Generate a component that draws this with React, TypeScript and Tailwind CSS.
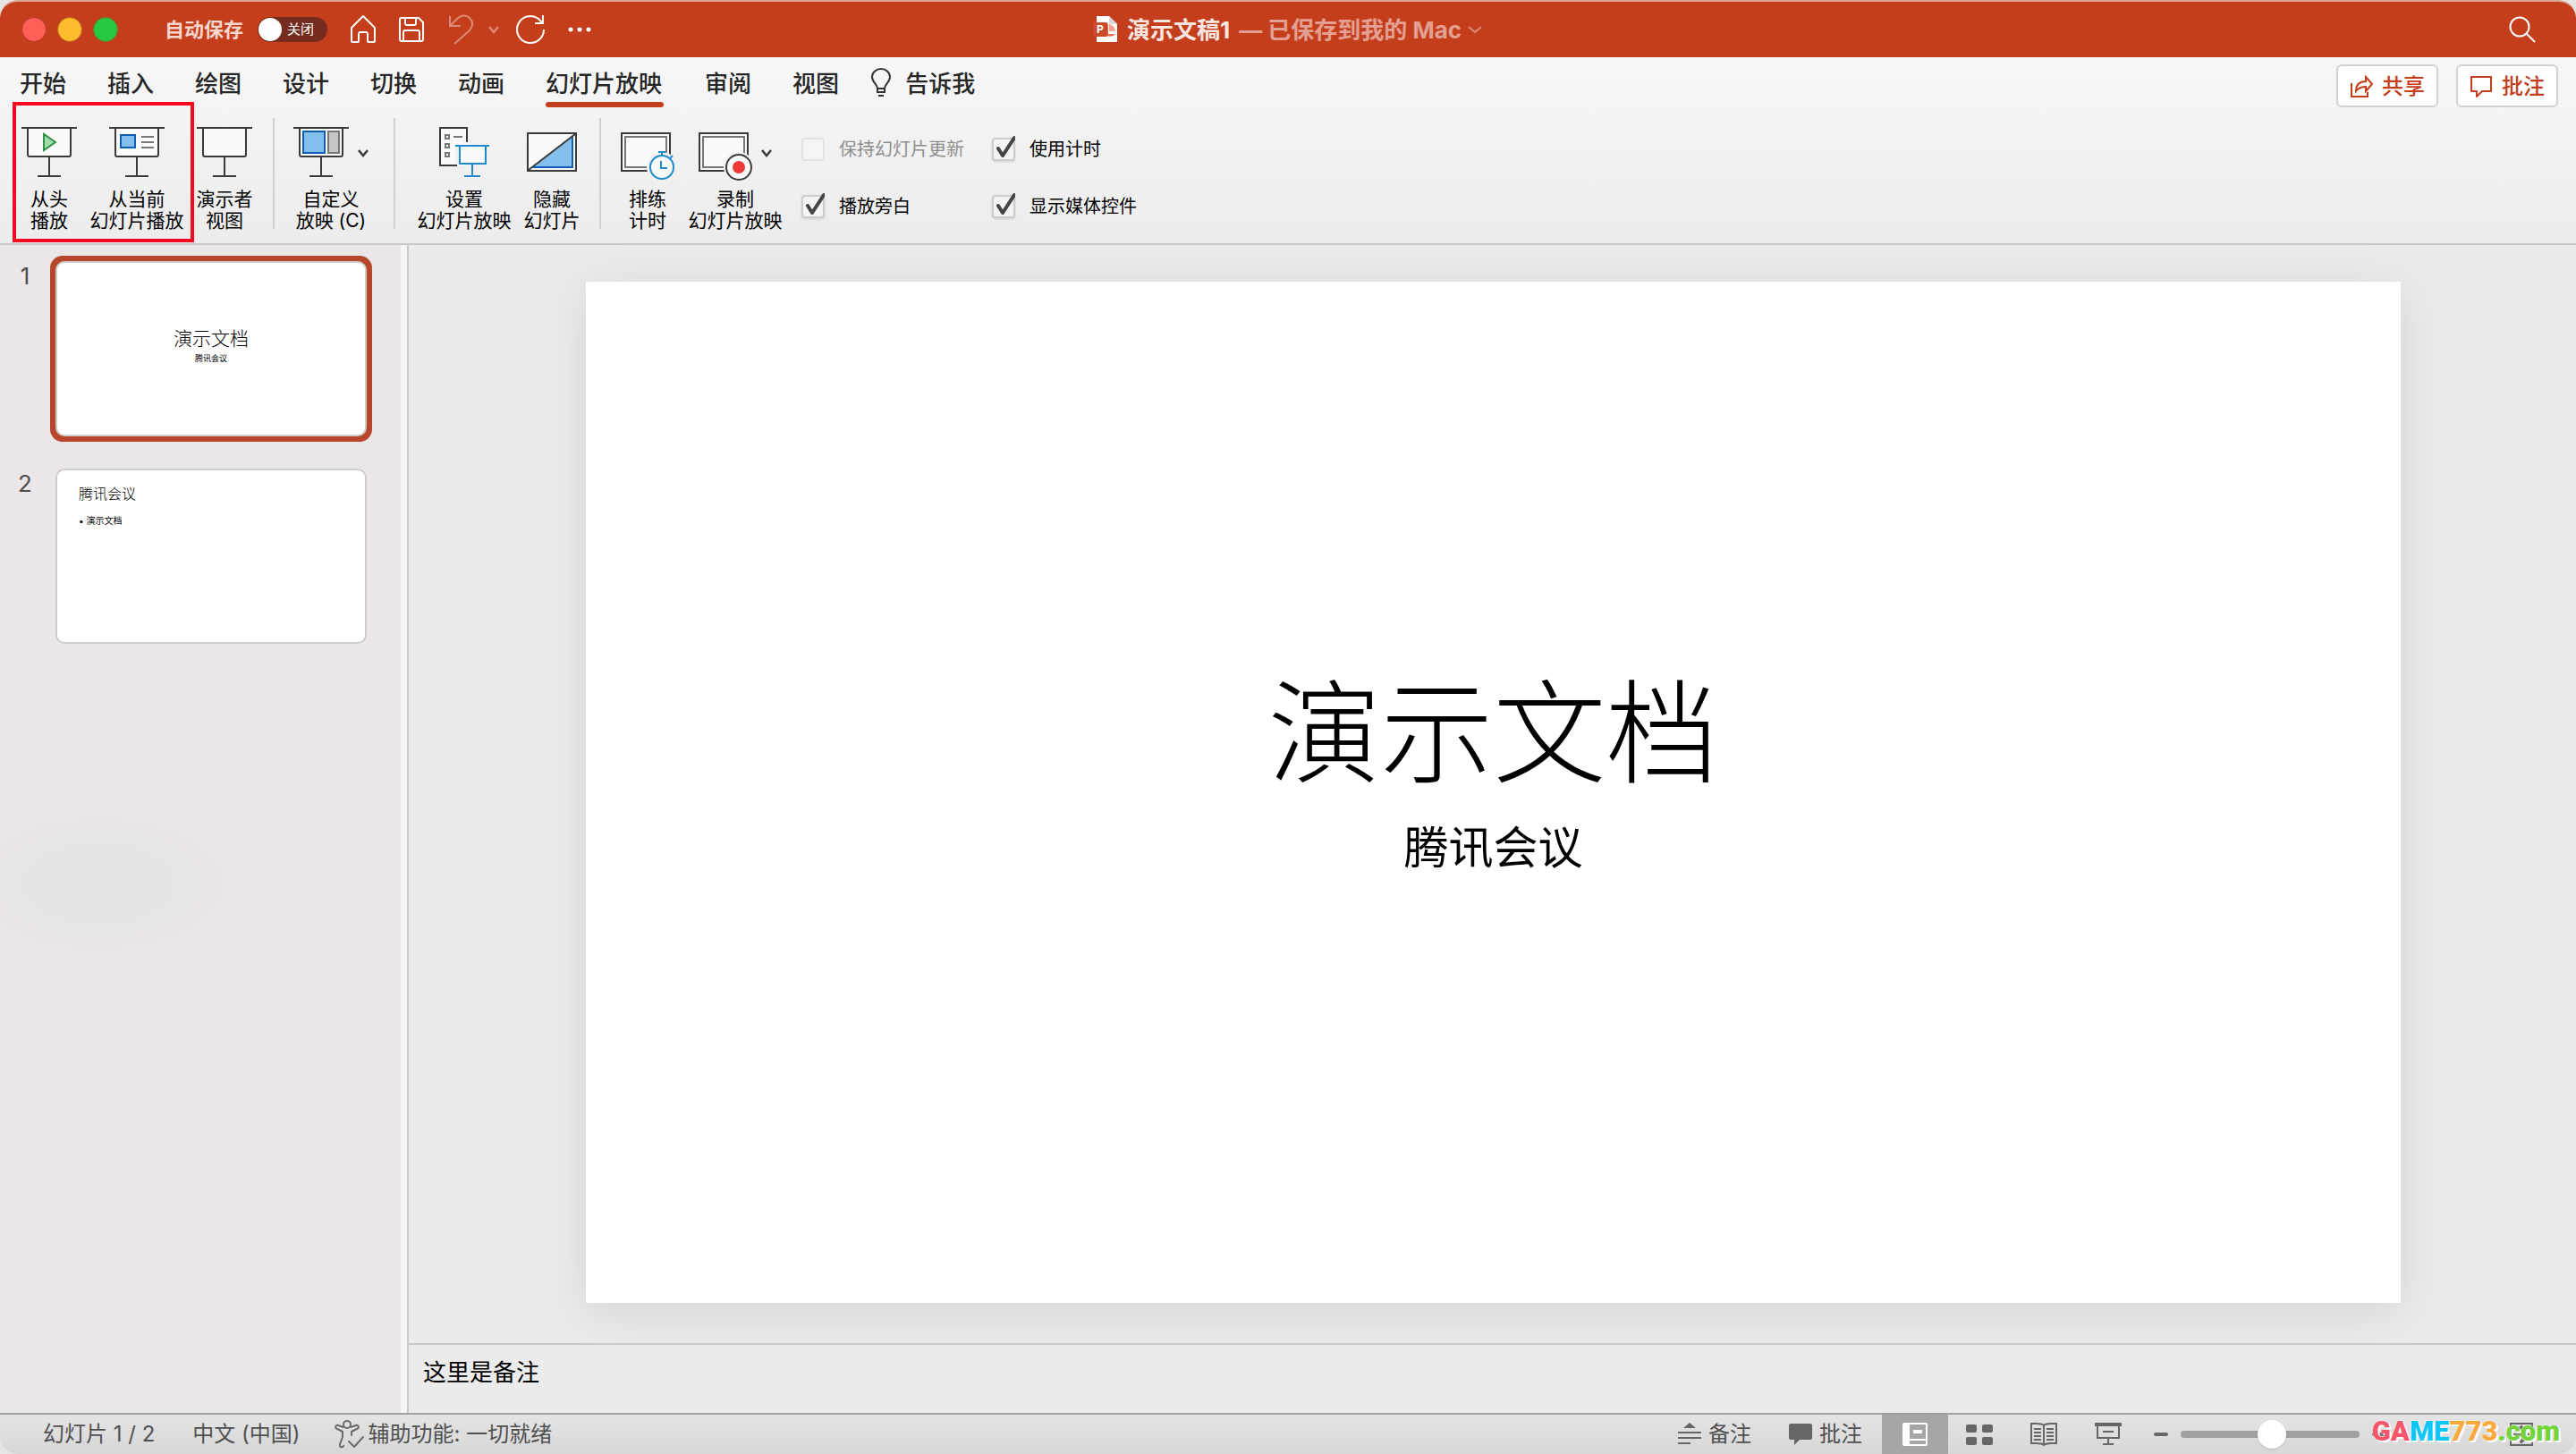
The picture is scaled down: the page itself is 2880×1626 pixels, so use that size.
import type { ReactNode } from "react";

const tabs = ["开始", "插入", "绘图", "设计", "切换", "动画", "幻灯片放映", "审阅", "视图"];

// Projector screen used by several ribbon buttons
function ScreenIcon({ children }: { children?: ReactNode }) {
  return (
    <svg width="62" height="56" viewBox="0 0 62 56" fill="none" aria-hidden="true">
      <path d="M7 2h48v31H7z" fill="#fafafa" />
      <path d="M0 1h62M7 1v30q0 2 2 2h44q2 0 2-2V1M31 33v22M18 55h26" stroke="#3b3a39" strokeWidth="2" />
      {children}
    </svg>
  );
}

function FromStartIcon() {
  return (
    <ScreenIcon>
      <path d="M25 8v18l13-9z" fill="#a1dcaa" stroke="#309048" strokeWidth="2" />
    </ScreenIcon>
  );
}

function FromCurrentIcon() {
  return (
    <ScreenIcon>
      <path d="M13 9h16v14H13z" fill="#83beec" stroke="#0f5fb0" strokeWidth="2" />
      <path d="M36 11h14M36 17h14M36 23h14" stroke="#797774" strokeWidth="2" />
    </ScreenIcon>
  );
}

function CustomShowIcon() {
  return (
    <ScreenIcon>
      <path d="M11 5h24v24H11z" fill="#83beec" stroke="#0f5fb0" strokeWidth="2" />
      <path d="M39 5h12v24H39z" fill="#c8c6c4" stroke="#797774" strokeWidth="2" />
    </ScreenIcon>
  );
}

function SetupIcon() {
  return (
    <svg width="56" height="56" viewBox="0 0 56 56" fill="none" aria-hidden="true">
      <path d="M1 1h30v42H1z" fill="#fafafa" />
      <path d="M31 17V1H1v42h19" stroke="#3b3a39" strokeWidth="2" />
      <path d="M7 9h4v4H7zM7 19h4v4H7zM7 29h4v4H7zM16 11h10" stroke="#797774" strokeWidth="2" />
      <path d="M18 20h38v22H18z" fill="#f0f0f0" />
      <path d="M23 22h29v19H23z" fill="#fafafa" />
      <path d="M18 21h38M23 21v20h29V21M37 41v14M28 55h18" stroke="#1e8bcd" strokeWidth="2" />
    </svg>
  );
}

function HideIcon() {
  return (
    <svg width="56" height="56" viewBox="0 0 56 56" fill="none" aria-hidden="true">
      <path d="M1 7h54v42H1z" fill="#fafafa" stroke="#3b3a39" strokeWidth="2" />
      <path d="M51 11v34H6z" fill="#83beec" />
      <path d="M51 11v34H6" stroke="#0f5fb0" strokeWidth="2" />
      <path d="M2 48 54 8" stroke="#3b3a39" strokeWidth="2" />
    </svg>
  );
}

function RehearseIcon() {
  return (
    <svg width="60" height="60" viewBox="0 0 60 60" fill="none" aria-hidden="true">
      <path d="M1 7h54v42H1z" fill="#fafafa" stroke="#3b3a39" strokeWidth="2" />
      <path d="M5 11h46v34H5z" stroke="#797774" strokeWidth="2" />
      <circle cx="46" cy="45" r="17" fill="#f1f1f1" />
      <circle cx="46" cy="45" r="13" fill="#fafafa" stroke="#1e8bcd" strokeWidth="2" />
      <path d="M46 32v-4M42 28h8M55 35l3-3M45 38v8h7" stroke="#1e8bcd" strokeWidth="2" />
    </svg>
  );
}

function RecordIcon() {
  return (
    <svg width="60" height="60" viewBox="0 0 60 60" fill="none" aria-hidden="true">
      <path d="M1 7h54v42H1z" fill="#fafafa" stroke="#3b3a39" strokeWidth="2" />
      <path d="M5 11h46v34H5z" stroke="#797774" strokeWidth="2" />
      <circle cx="45" cy="45" r="17" fill="#f1f1f1" />
      <circle cx="45" cy="45" r="14" fill="#fafafa" stroke="#3b3a39" strokeWidth="2" />
      <circle cx="45" cy="45" r="7" fill="#ee3b3a" />
    </svg>
  );
}

function Chevron({ className }: { className?: string }) {
  return (
    <svg width="12" height="10" viewBox="0 0 12 10" fill="none" stroke="currentColor" strokeWidth="2.500" className={className} aria-hidden="true">
      <path d="M1 2l5 6 5-6" />
    </svg>
  );
}

type RibbonButtonProps = {
  icon: ReactNode;
  lines: [string, string];
  menu?: boolean;
  className: string;
};

function RibbonButton({ icon, lines, menu, className }: RibbonButtonProps) {
  return (
    <button type="button" className={`flex shrink-0 flex-col items-center whitespace-nowrap text-[21px] leading-6 text-black ${className}`}>
      <span className="flex h-[69px] items-start gap-2.5">
        {icon}
        {menu && <Chevron className="mt-6 text-[#3b3a39]" />}
      </span>
      <span>{lines[0]}</span>
      <span>{lines[1]}</span>
    </button>
  );
}

function Divider({ className }: { className: string }) {
  return <div className={`-mt-2.5 h-[124px] w-0.5 shrink-0 bg-[#d0d0d0] ${className}`} />;
}

function Option({ label, checked, disabled }: { label: string; checked?: boolean; disabled?: boolean }) {
  return (
    <label className={`flex h-7 items-center gap-4 whitespace-nowrap text-xl ${disabled ? "text-[#8e8e8e]" : "text-black"}`}>
      <span className="relative h-[26px] w-[26px]">
        <input
          type="checkbox"
          defaultChecked={checked}
          disabled={disabled}
          className="peer block h-full w-full appearance-none rounded border-2 border-[#cdcdcd] bg-[#f4f4f4] shadow-sm disabled:border-[#e2e2e2] disabled:shadow-none"
        />
        <svg viewBox="0 0 26 30" className="pointer-events-none absolute -top-1 left-0 hidden h-[30px] w-[26px] peer-checked:block" fill="none" stroke="#454545" strokeWidth="4" strokeLinecap="round" strokeLinejoin="round" aria-hidden="true">
          <path d="M7 16l5 8L25 4" />
        </svg>
      </span>
      {label}
    </label>
  );
}

function TitleBar() {
  return (
    <header className="grid h-16 shrink-0 grid-cols-[1fr_auto_1fr] items-center rounded-t-[20px] border-t-2 border-[#dda394] bg-[#c43e1c] text-white">
      <div className="flex items-center pl-6">
        <div className="flex gap-3">
          <button type="button" aria-label="关闭窗口" className="h-7 w-7 rounded-full border border-[#b8352b] bg-[#ff5f57]" />
          <button type="button" aria-label="最小化" className="h-7 w-7 rounded-full border border-[#b86a1b] bg-[#febc2e]" />
          <button type="button" aria-label="缩放" className="h-7 w-7 rounded-full border border-[#6f7a1e] bg-[#28c840]" />
        </div>
        <span className="ml-[52px] text-[22px] font-bold text-[#f6d6cd]">自动保存</span>
        <button type="button" role="switch" aria-checked="false" className="ml-4 flex h-7 w-[78px] items-center gap-1.5 rounded-full bg-[#762d20] pl-px text-[15px]">
          <span className="h-[26px] w-[26px] rounded-full bg-white" />
          关闭
        </button>
        <button type="button" aria-label="主页" className="ml-6">
          <svg width="32" height="32" viewBox="0 0 32 32" fill="none" stroke="white" strokeWidth="2" strokeLinejoin="round">
            <path d="M3 14 16 1l13 13v15q0 1-1 1h-6q-1 0-1-1v-8q0-2-2-2h-6q-2 0-2 2v8q0 1-1 1H4q-1 0-1-1z" />
          </svg>
        </button>
        <button type="button" aria-label="保存" className="ml-[22px]">
          <svg width="32" height="32" viewBox="0 0 32 32" fill="none" stroke="white" strokeWidth="2" strokeLinejoin="round">
            <path d="M5 3h19l5 5v19q0 2-2 2H5q-2 0-2-2V5q0-2 2-2zM9 3v6q0 2 2 2h8q2 0 2-2V3M7 29V19q0-2 2-2h14q2 0 2 2v10" />
          </svg>
        </button>
        <div className="ml-6 flex items-center gap-4 text-[#dc8b76]">
          <button type="button" aria-label="撤消">
            <svg width="30" height="34" viewBox="0 0 30 34" fill="none" stroke="currentColor" strokeWidth="2">
              <path d="M3 2v11h12M3 13 11 5c4-4 10-5 14-1s4 9 0 14L8 33" />
            </svg>
          </button>
          <Chevron />
        </div>
        <button type="button" aria-label="重做" className="ml-[18px]">
          <svg width="34" height="34" viewBox="0 0 34 34" fill="none" stroke="white" strokeWidth="2">
            <path d="M32 17A15 15 0 1 1 26 5l4 4M31 1v9h-9" />
          </svg>
        </button>
        <button type="button" aria-label="更多" className="ml-6">
          <svg width="28" height="8" viewBox="0 0 28 8" fill="white">
            <circle cx="4" cy="4" r="2.500" />
            <circle cx="14" cy="4" r="2.500" />
            <circle cx="24" cy="4" r="2.500" />
          </svg>
        </button>
      </div>

      <h1 className="flex items-center whitespace-nowrap text-[26px] font-bold">
        <svg width="28" height="32" viewBox="0 0 28 32" className="mr-2.5" aria-hidden="true">
          <path d="M4 1h14l9 9v20H4z" fill="#fff" />
          <path d="M18 1v9h9z" fill="#d9d9d9" />
          <path d="M17 11v10h8a8 8 0 0 1-9 2V9z" fill="#e8694a" />
          <path d="M18 10a8 8 0 0 1 7 8h-7z" fill="#f6a18b" />
          <rect y="8" width="16" height="16" rx="1" fill="#cb4a2d" />
          <text x="4" y="20" fontSize="12" fontWeight="700" fill="#fff">P</text>
        </svg>
        <span className="text-[#fae6e1]">演示文稿1</span>
        <span className="ml-2.5 text-[#e3a092]">— 已保存到我的 Mac</span>
        <svg width="18" height="12" viewBox="0 0 18 12" fill="none" stroke="#dc8b76" strokeWidth="2" className="ml-1.5" aria-hidden="true">
          <path d="M2 3l7 6 7-6" />
        </svg>
      </h1>

      <div className="flex justify-end pr-[45px]">
        <button type="button" aria-label="搜索">
          <svg width="30" height="30" viewBox="0 0 30 30" fill="none" stroke="white" strokeWidth="2">
            <circle cx="12" cy="12" r="10.500" />
            <path d="M19.500 19.500 29 29" />
          </svg>
        </button>
      </div>
    </header>
  );
}

function TabRow() {
  return (
    <div className="flex h-14 items-start justify-between pr-5">
      <nav className="flex items-center pl-[22px] text-[26px] font-medium text-[#262626]">
        <div className="flex gap-[46px]">
          {tabs.map((tab) => (
            <button
              key={tab}
              type="button"
              className={`flex h-14 flex-col justify-between whitespace-nowrap pt-3 text-left leading-9 ${tab === "幻灯片放映" ? "min-w-[132px]" : ""}`}
            >
              {tab}
              {tab === "幻灯片放映" && <span className="h-1.5 w-full rounded-full bg-[#c43e1c]" />}
            </button>
          ))}
        </div>
        <button type="button" className="ml-9 flex h-14 items-start gap-4 pt-3 leading-9">
          <svg width="22" height="32" viewBox="0 0 22 32" fill="none" stroke="#333" strokeWidth="2" aria-hidden="true">
            <path d="M7 23c0-5-6-7-6-13a10 9 0 0 1 20 0c0 6-6 8-6 13v4H7zM7 23h8M8 31h6" />
          </svg>
          告诉我
        </button>
      </nav>
      <div className="flex gap-5 pt-2 text-2xl font-medium text-[#c43e1c]">
        <button type="button" className="flex h-12 w-[114px] items-center justify-center gap-2.5 rounded-md border-2 border-[#d2d2d2] bg-white pt-0.5">
          <svg width="26" height="26" viewBox="0 0 26 26" fill="none" stroke="currentColor" strokeWidth="2" aria-hidden="true">
            <path d="M2 9v15h18v-5M7 18c0-8 4-11 11-11V2l7 8-7 8v-5c-5 0-8 1-11 5z" />
          </svg>
          共享
        </button>
        <button type="button" className="flex h-12 w-[114px] items-center justify-center gap-2.5 rounded-md border-2 border-[#d2d2d2] bg-white pt-0.5">
          <svg width="26" height="26" viewBox="0 0 26 26" fill="none" stroke="currentColor" strokeWidth="2" strokeLinejoin="round" aria-hidden="true">
            <path d="M2 2h22v16H14l-6 6v-6H2z" />
          </svg>
          批注
        </button>
      </div>
    </div>
  );
}

function Ribbon() {
  return (
    <section className="shrink-0 border-b-2 border-[#c8c8c8] bg-linear-to-b from-[#f7f7f7] to-[#ececec]">
      <TabRow />
      <div className="relative flex h-[152px] items-start pt-[22px]">
        <RibbonButton icon={<FromStartIcon />} lines={["从头", "播放"]} className="ml-6 w-[62px]" />
        <RibbonButton icon={<FromCurrentIcon />} lines={["从当前", "幻灯片播放"]} className="ml-3.5 w-[106px]" />
        <RibbonButton icon={<ScreenIcon />} lines={["演示者", "视图"]} className="ml-3.5 w-[62px]" />
        <Divider className="ml-[23px]" />
        <RibbonButton icon={<CustomShowIcon />} lines={["自定义", "放映 (C)"]} menu className="ml-5 w-[86px]" />
        <Divider className="ml-[27px]" />
        <RibbonButton icon={<SetupIcon />} lines={["设置", "幻灯片放映"]} className="ml-6 w-[106px]" />
        <RibbonButton icon={<HideIcon />} lines={["隐藏", "幻灯片"]} className="ml-3.5 w-[62px]" />
        <Divider className="ml-[22px]" />
        <RibbonButton icon={<RehearseIcon />} lines={["排练", "计时"]} className="ml-[22px] w-[60px]" />
        <RibbonButton icon={<RecordIcon />} lines={["录制", "幻灯片放映"]} menu className="ml-3.5 w-[108px]" />
        <div className="ml-5 grid grid-cols-[auto_auto] gap-x-[31px] gap-y-9 pt-[11px]">
          <Option label="保持幻灯片更新" disabled />
          <Option label="使用计时" checked />
          <Option label="播放旁白" checked />
          <Option label="显示媒体控件" checked />
        </div>
        {/* highlight over the two play buttons */}
        <div className="pointer-events-none absolute -top-1.5 left-3.5 h-[157px] w-[203px] border-4 border-[#f5091f]" />
      </div>
    </section>
  );
}

function Thumbnails() {
  return (
    <aside className="w-[457px] shrink-0 border-r-2 border-[#c8c8c8] bg-[#f6f6f6] pr-[7px]">
      <ol className="flex h-full flex-col gap-6 bg-[radial-gradient(150px_80px_at_110px_714px,#e4e4e4_40%,#ebe6e7)] pt-3 text-[26px] text-[#4d4d4d]">
        <li className="flex items-start">
          <span className="w-14 pt-[3px] text-center">1</span>
          <button type="button" className="h-[208px] w-[360px] rounded-[14px] bg-[#b7472a] p-1.5">
            <span className="flex h-full flex-col items-center justify-center rounded-[10px] border-2 border-[#ccc] bg-white pb-1.5 text-black">
              <span className="text-[21px] leading-7 font-light">演示文档</span>
              <span className="text-[9px] leading-4">腾讯会议</span>
            </span>
          </button>
        </li>
        <li className="flex items-start">
          <span className="w-14 pt-[3px] text-center">2</span>
          <button type="button" className="h-[208px] w-[360px] p-1.5 text-left">
            <span className="flex h-full flex-col rounded-[10px] border-2 border-[#ccc] bg-white pt-3.5 pl-6 text-black">
              <span className="text-base leading-6 font-light">腾讯会议</span>
              <span className="mt-2.5 text-[10px] leading-4">• 演示文档</span>
            </span>
          </button>
        </li>
      </ol>
    </aside>
  );
}

function Editor() {
  return (
    <main className="flex min-w-0 flex-1 flex-col bg-[#ebebeb]">
      <div className="flex flex-1 items-center justify-center pb-1 pl-0.5">
        <article className="flex aspect-video w-[83.8%] flex-col items-center justify-center bg-white pb-12 text-black shadow-[0_10px_50px_rgba(0,0,0,0.1)]">
          <h2 className="text-[126px] leading-[160px] font-light">演示文档</h2>
          <p className="mt-3 text-[50px] leading-[72px]">腾讯会议</p>
        </article>
      </div>
      <div className="h-[78px] shrink-0 border-t-2 border-[#c8c8c8] px-4 pt-[11px] text-[26px] leading-10 text-black">
        这里是备注
      </div>
    </main>
  );
}

function StatusBar() {
  return (
    <footer className="relative flex h-[46px] shrink-0 items-center justify-between rounded-b-[20px] border-t-2 border-[#a0a0a0] bg-linear-to-b from-[#e4e4e4] to-[#d7d7d7] text-2xl text-[#505050]">
      <div className="flex items-center pl-12">
        <span>幻灯片 1 / 2</span>
        <button type="button" className="ml-[42px]">中文 (中国)</button>
        <button type="button" className="ml-[38px] flex items-center gap-1">
          <svg width="34" height="32" viewBox="0 0 34 32" fill="none" stroke="#6b6b6b" strokeWidth="2" strokeLinejoin="round" strokeLinecap="round" aria-hidden="true">
            <circle cx="14" cy="5" r="4" />
            <path d="M10 8 4 6C1 5 0 9 3 10l6 3v6L6 27c-1 4 3 4 4 2M18 8l6-2c3-1 4 3 1 4l-6 3v4M16 24l6 6 10-11" />
          </svg>
          辅助功能: 一切就绪
        </button>
      </div>

      <div className="flex h-full items-center">
        <button type="button" className="flex items-center gap-2">
          <svg width="26" height="26" viewBox="0 0 26 26" fill="#666" aria-hidden="true">
            <path d="M13 0l7 6H6zM0 10h26v2H0zM0 16h26v2H0zM0 22h14v2H0z" />
          </svg>
          备注
        </button>
        <button type="button" className="ml-[42px] flex items-center gap-2">
          <svg width="26" height="26" viewBox="0 0 26 26" fill="#666" aria-hidden="true">
            <path d="M2 1h22q2 0 2 2v14q0 2-2 2H12l-6 6v-6H2q-2 0-2-2V3q0-2 2-2z" />
          </svg>
          批注
        </button>
        <button type="button" aria-label="普通视图" className="ml-[22px] flex h-full w-[74px] items-center justify-center bg-[#a6a6a6]">
          <svg width="28" height="26" viewBox="0 0 28 26" aria-hidden="true">
            <rect width="28" height="26" rx="2" fill="#fff" />
            <path d="M8 2h18v16H8zM8 20h18v4H8z" fill="#a6a6a6" />
            <path d="M12 8h10v4H12z" fill="#fff" />
          </svg>
        </button>
        <button type="button" aria-label="幻灯片浏览" className="ml-5">
          <svg width="30" height="24" viewBox="0 0 30 24" fill="#666" aria-hidden="true">
            <rect width="12" height="9" y="1" rx="2" />
            <rect width="12" height="9" x="18" y="1" rx="2" />
            <rect width="12" height="9" y="15" rx="2" />
            <rect width="12" height="9" x="18" y="15" rx="2" />
          </svg>
        </button>
        <button type="button" aria-label="阅读视图" className="ml-[42px]">
          <svg width="30" height="28" viewBox="0 0 30 28" fill="none" stroke="#666" strokeWidth="2" aria-hidden="true">
            <path d="M15 4C12 1 8 2 1 2v22c7 0 11-1 14 2 3-3 7-2 14-2V2c-7 0-11-1-14 2zv22M4 8h8M4 12h8M4 16h8M4 20h8M18 8h8M18 12h8M18 16h8M18 20h8" />
          </svg>
        </button>
        <button type="button" aria-label="幻灯片放映" className="ml-[42px]">
          <svg width="30" height="26" viewBox="0 0 30 26" fill="none" stroke="#666" strokeWidth="2" aria-hidden="true">
            <path d="M0 2h30" strokeWidth="4" />
            <path d="M3 4v13h24V4M9 10h12M15 17v7M9 24h12" />
          </svg>
        </button>
        <button type="button" aria-label="缩小" className="ml-9 h-1 w-4 rounded-sm bg-[#666]" />
        <input
          type="range"
          aria-label="缩放"
          defaultValue={51}
          className="ml-3.5 h-2 w-[200px] appearance-none rounded-full bg-[#a0a0a0] [&::-webkit-slider-thumb]:h-8 [&::-webkit-slider-thumb]:w-8 [&::-webkit-slider-thumb]:appearance-none [&::-webkit-slider-thumb]:rounded-full [&::-webkit-slider-thumb]:bg-white [&::-webkit-slider-thumb]:shadow"
        />
        <button type="button" aria-label="放大" className="ml-3.5 h-1 w-4 rounded-sm bg-[#666]" />
        <button type="button" aria-label="适应窗口" className="mr-12 ml-[138px]">
          <svg width="26" height="26" viewBox="0 0 26 26" fill="none" stroke="#666" strokeWidth="2" aria-hidden="true">
            <path d="M1 1h24v24H1zM13 4v18M4 13h18M10 7l3-3 3 3M10 19l3 3 3-3" />
          </svg>
        </button>
      </div>

      {/* site mark laid over the zoom controls */}
      <div className="absolute -top-0.5 right-[18px] flex font-['Roboto',sans-serif] text-[31px] leading-[42px] font-black [text-shadow:0_0_2px_#fff,2px_2px_0_#fff]">
        <span className="text-[#f6566b]">GA</span>
        <span className="text-[#10c6f7]">ME</span>
        <span className="text-[#fba93a]">773</span>
        <span className="text-[#72d43a]">.com</span>
      </div>
    </footer>
  );
}

export default function App() {
  return (
    <div className="flex min-h-screen flex-col bg-[#e6e6e6] font-[Inter,'Noto_Sans_CJK_SC',sans-serif]">
      <TitleBar />
      <Ribbon />
      <div className="flex flex-1">
        <Thumbnails />
        <Editor />
      </div>
      <StatusBar />
    </div>
  );
}
